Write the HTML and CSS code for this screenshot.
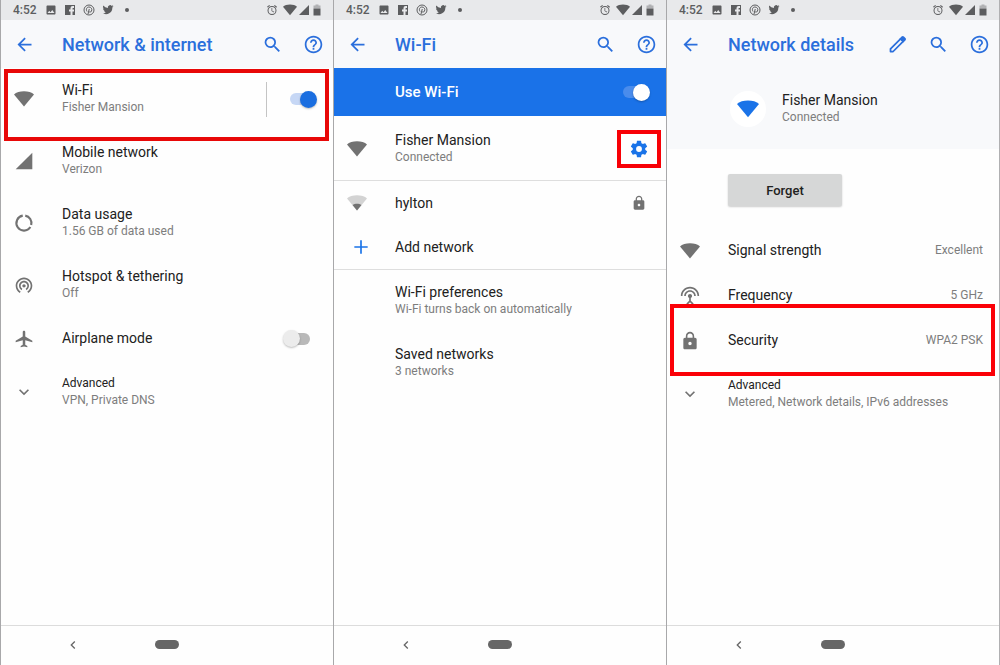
FILE: index.html
```html
<!DOCTYPE html>
<html lang="en">
<head>
<meta charset="UTF-8" />
<meta name="viewport" content="width=device-width, initial-scale=1" />
<title>Network settings</title>
<link rel="stylesheet" href="styles.css">
</head>
<body>

<!-- Shared icons -->
<svg class="sprite" aria-hidden="true">
  <symbol id="i-image" viewBox="0 0 24 24"><path d="M21 19V5c0-1.100-.9-2-2-2H5c-1.100 0-2 .9-2 2v14c0 1.100.9 2 2 2h14c1.100 0 2-.9 2-2zM8.500 13.500l2.500 3.010L14.500 12l4.500 6H5l3.500-4.500z"/></symbol>
  <symbol id="i-facebook" viewBox="0 0 24 24"><path d="M2 2h20v20h-5v-7h3v-4h-3V9q0-1 1-1h2V4h-3q-4 0-4 4v3h-3v4h3v7H2z"/></symbol>
  <symbol id="i-pinterest" viewBox="0 0 24 24"><g fill="none" stroke="currentColor" stroke-width="2"><circle cx="12" cy="12" r="10"/><path d="M8 15c-3-5 0-9 4-9s7 4 5 8-5 2-5 1M12.500 10L10 20"/></g></symbol>
  <symbol id="i-twitter" viewBox="0 0 24 24"><path d="M23 4.500c-.8.400-1.700.6-2.600.7.900-.6 1.600-1.500 2-2.500-.9.500-1.800.9-2.900 1.100a4.500 4.500 0 0 0-7.700 4.100A12.800 12.800 0 0 1 2.500 3.200a4.500 4.500 0 0 0 1.400 6c-.7 0-1.400-.2-2-.6 0 2.200 1.500 4.100 3.600 4.500-.7.200-1.400.2-2 .1.600 1.800 2.200 3.100 4.200 3.100A9 9 0 0 1 1 18.200 12.800 12.800 0 0 0 20.700 6.800c.9-.6 1.700-1.400 2.300-2.300z"/></symbol>
  <symbol id="i-dot" viewBox="0 0 24 24"><circle cx="12" cy="12" r="4"/></symbol>
  <symbol id="i-alarm" viewBox="0 0 24 24"><path d="M22 5.720l-4.600-3.860-1.290 1.530 4.600 3.860L22 5.720zM7.880 3.390L6.600 1.860 2 5.710l1.290 1.530 4.590-3.850zM12.500 8H11v6l4.750 2.850.75-1.230-4-2.370V8zM12 4a9 9 0 1 0 0 18 9 9 0 0 0 0-18zm0 16a7 7 0 1 1 0-14 7 7 0 0 1 0 14z"/></symbol>
  <symbol id="i-wifi" viewBox="0 0 24 24"><path d="M12 21L0 6.500C5 1.500 19 1.500 24 6.500z"/></symbol>
  <symbol id="i-wifi-low" viewBox="0 0 24 24"><path opacity=".3" d="M12 21L0 6.500C5 1.500 19 1.500 24 6.500z"/><path d="M12 21L6.600 14.500c3-2.100 7.800-2.100 10.800 0z"/></symbol>
  <symbol id="i-cell" viewBox="0 0 24 24"><path d="M2 22h20V2z"/></symbol>
  <symbol id="i-battery" viewBox="0 0 24 24"><path opacity=".4" d="M9 1h6v2h4v6H5V3h4z"/><path d="M5 9h14v14H5z"/></symbol>
  <symbol id="i-back" viewBox="0 0 24 24"><path d="M20 11H7.830l5.590-5.590L12 4l-8 8 8 8 1.410-1.410L7.830 13H20v-2z"/></symbol>
  <symbol id="i-search" viewBox="0 0 24 24"><path d="M15.500 14h-.79l-.28-.27A6.471 6.471 0 0 0 16 9.500 6.500 6.500 0 1 0 9.500 16c1.610 0 3.090-.59 4.230-1.570l.27.28v.79l5 4.990L20.490 19l-4.990-5zm-6 0C7.010 14 5 11.990 5 9.500S7.010 5 9.500 5 14 7.010 14 9.500 11.990 14 9.500 14z"/></symbol>
  <symbol id="i-help" viewBox="0 0 24 24"><path d="M11 18h2v-2h-2v2zm1-16C6.480 2 2 6.480 2 12s4.480 10 10 10 10-4.480 10-10S17.520 2 12 2zm0 18c-4.410 0-8-3.590-8-8s3.590-8 8-8 8 3.590 8 8-3.590 8-8 8zm0-14c-2.210 0-4 1.790-4 4h2c0-1.100.9-2 2-2s2 .9 2 2c0 2-3 1.750-3 5h2c0-2.250 3-2.500 3-5 0-2.210-1.790-4-4-4z"/></symbol>
  <symbol id="i-edit" viewBox="0 0 24 24"><path fill="none" stroke="currentColor" stroke-width="2" stroke-linejoin="round" d="M4 20v-3L15.500 5.500l3 3L7 20z"/><path d="M14.200 5.300l2.400-2.400c.8-.8 2-.8 2.800 0l1.700 1.700c.8.800.8 2 0 2.800l-2.400 2.400z"/></symbol>
  <symbol id="i-data" viewBox="0 0 24 24"><g fill="none" stroke="currentColor" stroke-width="2.600"><path d="M13.500 3.200a9 9 0 0 1 7.100 11.200M19.600 16.800A9 9 0 1 1 10.500 3.200"/></g></symbol>
  <symbol id="i-hotspot" viewBox="0 0 24 24"><path d="M12 11c-1.100 0-2 .9-2 2s.9 2 2 2 2-.9 2-2-.9-2-2-2zm6 2c0-3.310-2.690-6-6-6s-6 2.690-6 6c0 2.220 1.210 4.150 3 5.190l1-1.740c-1.190-.7-2-1.970-2-3.450 0-2.210 1.790-4 4-4s4 1.790 4 4c0 1.480-.81 2.750-2 3.450l1 1.740c1.790-1.040 3-2.970 3-5.190zM12 3C6.480 3 2 7.480 2 13c0 3.700 2.010 6.920 4.990 8.650l1-1.730C5.610 18.530 4 15.960 4 13c0-4.420 3.580-8 8-8s8 3.580 8 8c0 2.960-1.610 5.530-4 6.920l1 1.730c2.990-1.730 5-4.950 5-8.650 0-5.520-4.480-10-10-10z"/></symbol>
  <symbol id="i-plane" viewBox="0 0 24 24"><path d="M22 16v-2l-8.500-5V3.500c0-.83-.67-1.500-1.500-1.500s-1.500.67-1.500 1.500V9L2 14v2l8.500-2.500V19L8 20.500V22l4-1 4 1v-1.500L13.500 19v-5.500L22 16z"/></symbol>
  <symbol id="i-down" viewBox="0 0 24 24"><path d="M7.410 8.590L12 13.170l4.590-4.580L18 10l-6 6-6-6z"/></symbol>
  <symbol id="i-left" viewBox="0 0 24 24"><path d="M15.410 7.410L14 6l-6 6 6 6 1.410-1.410L10.830 12z"/></symbol>
  <symbol id="i-plus" viewBox="0 0 24 24"><path d="M20 13h-7v7h-2v-7H4v-2h7V4h2v7h7z"/></symbol>
  <symbol id="i-lock" viewBox="0 0 24 24"><path d="M18 8h-1V6c0-2.760-2.240-5-5-5S7 3.240 7 6v2H6c-1.100 0-2 .9-2 2v10c0 1.100.9 2 2 2h12c1.100 0 2-.9 2-2V10c0-1.100-.9-2-2-2zm-6 9c-1.100 0-2-.9-2-2s.9-2 2-2 2 .9 2 2-.9 2-2 2zm3.100-9H8.900V6c0-1.710 1.390-3.100 3.100-3.100s3.100 1.390 3.100 3.100v2z"/></symbol>
  <symbol id="i-gear" viewBox="0 0 24 24"><path d="M19.430 12.980c.04-.32.07-.64.07-.98s-.03-.66-.07-.98l2.110-1.650c.19-.15.24-.42.12-.64l-2-3.460c-.12-.22-.39-.3-.61-.22l-2.490 1c-.52-.4-1.080-.73-1.690-.98l-.38-2.650A.488.488 0 0 0 14 2h-4c-.25 0-.46.18-.49.420l-.38 2.650c-.61.250-1.170.590-1.690.980l-2.490-1c-.23-.09-.49 0-.61.220l-2 3.460c-.13.220-.07.490.12.640l2.110 1.650c-.04.320-.07.650-.07.980s.03.660.07.980l-2.110 1.650c-.19.150-.24.420-.12.640l2 3.460c.12.220.39.300.61.220l2.490-1c.52.400 1.080.730 1.690.980l.38 2.650c.03.240.24.420.49.420h4c.25 0 .46-.18.49-.42l.38-2.650c.61-.25 1.170-.59 1.690-.98l2.490 1c.23.090.49 0 .61-.22l2-3.460c.12-.22.070-.49-.12-.64l-2.110-1.650zM12 15.500a3.500 3.500 0 1 1 0-7 3.500 3.500 0 0 1 0 7z"/></symbol>
  <symbol id="i-antenna" viewBox="0 0 24 24"><path d="M12 5c-3.870 0-7 3.130-7 7h2c0-2.760 2.240-5 5-5s5 2.240 5 5h2c0-3.870-3.130-7-7-7zm1 9.290c.88-.39 1.500-1.260 1.500-2.290 0-1.380-1.120-2.500-2.500-2.500S9.500 10.620 9.500 12c0 1.020.62 1.900 1.500 2.290v3.300L7.590 21 9 22.410l3-3 3 3L16.410 21 13 17.590v-3.300zM12 1C5.930 1 1 5.930 1 12h2c0-4.970 4.030-9 9-9s9 4.030 9 9h2c0-6.070-4.930-11-11-11z"/></symbol>
</svg>

<div class="screens">

  <!-- Network & internet -->
  <section class="phone">
    <div class="status">
      <span class="time">4:52</span>
      <svg><use href="#i-image"/></svg>
      <svg><use href="#i-facebook"/></svg>
      <svg><use href="#i-pinterest"/></svg>
      <svg><use href="#i-twitter"/></svg>
      <svg><use href="#i-dot"/></svg>
      <span class="status-right">
        <svg><use href="#i-alarm"/></svg>
        <svg class="signal"><use href="#i-wifi"/></svg>
        <svg><use href="#i-cell"/></svg>
        <svg class="battery"><use href="#i-battery"/></svg>
      </span>
    </div>
    <header class="appbar">
      <button class="icon-btn" aria-label="Back"><svg><use href="#i-back"/></svg></button>
      <h1>Network &amp; internet</h1>
      <button class="icon-btn" aria-label="Search"><svg><use href="#i-search"/></svg></button>
      <button class="icon-btn" aria-label="Help"><svg><use href="#i-help"/></svg></button>
    </header>
    <main>
      <div class="row marked">
        <svg class="icon"><use href="#i-wifi"/></svg>
        <label class="text" for="wifi-toggle"><span class="title">Wi-Fi</span><span class="sub">Fisher Mansion</span></label>
        <span class="divider"></span>
        <input class="switch" type="checkbox" id="wifi-toggle" checked>
      </div>
      <a class="row" href="#mobile">
        <svg class="icon"><use href="#i-cell"/></svg>
        <span class="text"><span class="title">Mobile network</span><span class="sub">Verizon</span></span>
      </a>
      <a class="row" href="#data">
        <svg class="icon"><use href="#i-data"/></svg>
        <span class="text"><span class="title">Data usage</span><span class="sub">1.56 GB of data used</span></span>
      </a>
      <a class="row" href="#hotspot">
        <svg class="icon"><use href="#i-hotspot"/></svg>
        <span class="text"><span class="title">Hotspot &amp; tethering</span><span class="sub">Off</span></span>
      </a>
      <div class="row short">
        <svg class="icon"><use href="#i-plane"/></svg>
        <label class="text" for="airplane-toggle"><span class="title">Airplane mode</span></label>
        <input class="switch" type="checkbox" id="airplane-toggle">
      </div>
      <a class="row advanced" href="#advanced">
        <svg class="icon"><use href="#i-down"/></svg>
        <span class="text"><span class="title">Advanced</span><span class="sub">VPN, Private DNS</span></span>
      </a>
    </main>
    <nav class="navbar">
      <button class="nav-back" aria-label="Back"><svg><use href="#i-left"/></svg></button>
      <button class="nav-home" aria-label="Home"></button>
    </nav>
  </section>

  <!-- Wi-Fi -->
  <section class="phone">
    <div class="status">
      <span class="time">4:52</span>
      <svg><use href="#i-image"/></svg>
      <svg><use href="#i-facebook"/></svg>
      <svg><use href="#i-pinterest"/></svg>
      <svg><use href="#i-twitter"/></svg>
      <svg><use href="#i-dot"/></svg>
      <span class="status-right">
        <svg><use href="#i-alarm"/></svg>
        <svg class="signal"><use href="#i-wifi"/></svg>
        <svg><use href="#i-cell"/></svg>
        <svg class="battery"><use href="#i-battery"/></svg>
      </span>
    </div>
    <header class="appbar">
      <button class="icon-btn" aria-label="Back"><svg><use href="#i-back"/></svg></button>
      <h1>Wi-Fi</h1>
      <button class="icon-btn" aria-label="Search"><svg><use href="#i-search"/></svg></button>
      <button class="icon-btn" aria-label="Help"><svg><use href="#i-help"/></svg></button>
    </header>
    <main>
      <div class="use-wifi">
        <label for="use-wifi">Use Wi-Fi</label>
        <input class="switch light" type="checkbox" id="use-wifi" checked>
      </div>
      <div class="group first">
        <div class="row">
          <svg class="icon"><use href="#i-wifi"/></svg>
          <span class="text"><span class="title">Fisher Mansion</span><span class="sub">Connected</span></span>
          <button class="gear" aria-label="Network settings"><svg><use href="#i-gear"/></svg></button>
        </div>
      </div>
      <div class="group">
        <a class="row short" href="#hylton">
          <svg class="icon"><use href="#i-wifi-low"/></svg>
          <span class="text"><span class="title">hylton</span></span>
          <svg class="lock"><use href="#i-lock"/></svg>
        </a>
        <a class="row short add" href="#add">
          <svg class="icon"><use href="#i-plus"/></svg>
          <span class="text"><span class="title">Add network</span></span>
        </a>
      </div>
      <a class="row no-icon" href="#preferences">
        <span class="text"><span class="title">Wi-Fi preferences</span><span class="sub">Wi-Fi turns back on automatically</span></span>
      </a>
      <a class="row no-icon" href="#saved">
        <span class="text"><span class="title">Saved networks</span><span class="sub">3 networks</span></span>
      </a>
    </main>
    <nav class="navbar">
      <button class="nav-back" aria-label="Back"><svg><use href="#i-left"/></svg></button>
      <button class="nav-home" aria-label="Home"></button>
    </nav>
  </section>

  <!-- Network details -->
  <section class="phone">
    <div class="status">
      <span class="time">4:52</span>
      <svg><use href="#i-image"/></svg>
      <svg><use href="#i-facebook"/></svg>
      <svg><use href="#i-pinterest"/></svg>
      <svg><use href="#i-twitter"/></svg>
      <svg><use href="#i-dot"/></svg>
      <span class="status-right">
        <svg><use href="#i-alarm"/></svg>
        <svg class="signal"><use href="#i-wifi"/></svg>
        <svg><use href="#i-cell"/></svg>
        <svg class="battery"><use href="#i-battery"/></svg>
      </span>
    </div>
    <header class="appbar">
      <button class="icon-btn" aria-label="Back"><svg><use href="#i-back"/></svg></button>
      <h1>Network details</h1>
      <button class="icon-btn" aria-label="Edit"><svg><use href="#i-edit"/></svg></button>
      <button class="icon-btn" aria-label="Search"><svg><use href="#i-search"/></svg></button>
      <button class="icon-btn" aria-label="Help"><svg><use href="#i-help"/></svg></button>
    </header>
    <main>
      <div class="network">
        <span class="badge"><svg><use href="#i-wifi"/></svg></span>
        <span class="text"><span class="title">Fisher Mansion</span><span class="sub">Connected</span></span>
      </div>
      <div class="actions">
        <button class="forget">Forget</button>
      </div>
      <div class="row short">
        <svg class="icon"><use href="#i-wifi"/></svg>
        <span class="text"><span class="title">Signal strength</span></span>
        <span class="sub">Excellent</span>
      </div>
      <div class="row short">
        <svg class="icon"><use href="#i-antenna"/></svg>
        <span class="text"><span class="title">Frequency</span></span>
        <span class="sub">5 GHz</span>
      </div>
      <div class="row short marked tall">
        <svg class="icon"><use href="#i-lock"/></svg>
        <span class="text"><span class="title">Security</span></span>
        <span class="sub">WPA2 PSK</span>
      </div>
      <a class="row advanced" href="#details-advanced">
        <svg class="icon"><use href="#i-down"/></svg>
        <span class="text"><span class="title">Advanced</span><span class="sub">Metered, Network details, IPv6 addresses</span></span>
      </a>
    </main>
    <nav class="navbar">
      <button class="nav-back" aria-label="Back"><svg><use href="#i-left"/></svg></button>
      <button class="nav-home" aria-label="Home"></button>
    </nav>
  </section>

</div>
</body>
</html>
```

FILE: styles.css
```css
* {
  box-sizing: border-box;
}
body {
  margin: 0;
  font-family: Roboto, "Liberation Sans", sans-serif;
  font-size: 14px;
  color: #212121;
  background: #fefefe;
}
button {
  border: 0;
  padding: 0;
  background: none;
  font-family: inherit;
  cursor: pointer;
}
svg {
  display: block;
  fill: currentColor;
  flex-shrink: 0;
}
.sprite {
  display: none;
}

.screens {
  display: grid;
  grid-template-columns: repeat(3, 1fr);
  min-height: 100vh;
  border-right: 1px solid #b0b0b2;
}
.phone {
  display: flex;
  flex-direction: column;
  border-left: 1px solid #a8a8aa;
}
main {
  flex: 1;
}

/* Status bar */
.status {
  display: flex;
  align-items: center;
  gap: 7px;
  height: 20px;
  padding: 0 10px 0 12px;
  background: #e8e9eb;
  color: #5c5d5f;
}
.status svg {
  width: 12px;
  height: 12px;
}
.time {
  width: 25px;
  font-size: 12px;
  font-weight: 500;
}
.status-right {
  display: flex;
  align-items: center;
  gap: 1px;
  margin-left: auto;
}
.status .signal {
  width: 14px;
  height: 14px;
  margin-left: 4px;
}

/* App bar */
.appbar {
  display: flex;
  align-items: center;
  gap: 20px;
  height: 48px;
  padding: 0 9px 0 13px;
  background: #f8f9fb;
  color: #2b6fdc;
}
.appbar h1 {
  flex: 1;
  margin: 0 0 0 7px;
  font-size: 18px;
  font-weight: 500;
}
.icon-btn {
  color: inherit;
}
.icon-btn svg {
  width: 21px;
  height: 21px;
}

/* List rows */
.row {
  position: relative;
  display: flex;
  align-items: center;
  gap: 28px;
  min-height: 62px;
  padding: 0 16px 0 13px;
  color: #212121;
  text-decoration: none;
}
.row.short {
  min-height: 45px;
}
.group .row.short {
  min-height: 44px;
}
.row.no-icon {
  padding-left: 61px;
}
.icon {
  width: 20px;
  height: 20px;
  color: #727272;
}
.row.add {
  gap: 24px;
  padding-left: 17px;
}
.add .icon {
  color: #1a73e8;
}
.text {
  display: flex;
  flex-direction: column;
  flex: 1;
}
.title {
  line-height: 17px;
}
.sub {
  font-size: 12px;
  line-height: 17px;
  color: #7d7d7d;
}
.advanced .title {
  font-size: 12px;
}
.divider {
  width: 1px;
  height: 35px;
  margin-right: -12px;
  background: #c4c4c4;
}
.lock {
  width: 16px;
  height: 16px;
  margin-right: 3px;
  color: #727272;
}
.group {
  border-bottom: 1px solid #dedede;
}
.group.first {
  padding-top: 2px;
}

/* Red frames */
.marked::after {
  content: "";
  position: absolute;
  z-index: 1;
  top: 1px;
  right: 4px;
  bottom: -11px;
  left: 3px;
  border: 4px solid #e80808;
  pointer-events: none;
}
.marked.tall::after {
  top: -14px;
  bottom: -13px;
  border-color: #fb0007;
}
.gear {
  display: grid;
  place-items: center;
  width: 44px;
  height: 38px;
  margin-right: -11px;
  border: 4px solid #f80006;
  color: #1a73e8;
}
.gear svg {
  width: 20px;
  height: 20px;
}

/* Switch */
.switch {
  appearance: none;
  display: grid;
  align-items: center;
  width: 34px;
  height: 18px;
  margin: 0;
  cursor: pointer;
}
.switch::before,
.switch::after {
  content: "";
  grid-area: 1 / 1;
}
.switch::before {
  height: 12px;
  margin: 0 7px;
  border-radius: 6px;
  background: #b9b9b9;
}
.switch::after {
  width: 17px;
  height: 17px;
  border-radius: 50%;
  background: #ececec;
  box-shadow: 0 1px 2px rgba(0, 0, 0, 0.25);
}
.switch:checked::before {
  background: #c6d7f5;
}
.switch:checked::after {
  justify-self: end;
  background: #1a6ee0;
}
.switch.light:checked::before {
  background: #4a8cec;
}
.switch.light:checked::after {
  background: #ffffff;
}

/* Wi-Fi screen */
.use-wifi {
  display: flex;
  align-items: center;
  justify-content: space-between;
  height: 48px;
  padding: 0 16px 0 61px;
  background: #1a72e8;
  color: #ffffff;
  font-size: 15px;
  font-weight: 500;
}

/* Network details screen */
.network {
  display: flex;
  align-items: center;
  gap: 16px;
  height: 81px;
  padding-left: 63px;
  background: #f8f9fb;
}
.badge {
  display: grid;
  place-items: center;
  width: 36px;
  height: 36px;
  border-radius: 50%;
  background: #ffffff;
  color: #1a73e8;
}
.badge svg {
  width: 22px;
  height: 22px;
}
.actions {
  padding: 25px 16px 22px 61px;
}
.forget {
  display: block;
  width: 114px;
  height: 32px;
  border-radius: 2px;
  background: #d6d7d7;
  box-shadow: 0 1px 2px rgba(0, 0, 0, 0.2);
  color: #212121;
  font-size: 13px;
  font-weight: 500;
}

/* Navigation bar */
.navbar {
  display: grid;
  grid-template-columns: 1fr 24px 1fr;
  align-items: center;
  height: 40px;
  padding-bottom: 2px;
  border-top: 1px solid #dcdcdc;
  color: #666666;
}
.nav-back {
  justify-self: center;
  margin-right: 10px;
  color: inherit;
}
.nav-back svg {
  width: 16px;
  height: 16px;
}
.nav-home {
  height: 9px;
  border-radius: 5px;
  background: #666666;
}
```
